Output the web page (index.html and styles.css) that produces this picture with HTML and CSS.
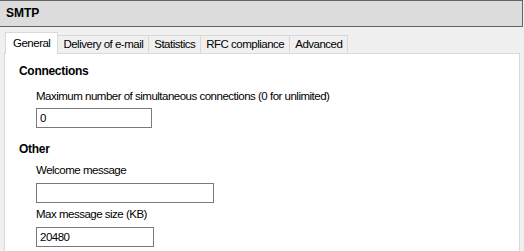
FILE: index.html
```html
<!DOCTYPE html>
<html lang="en">
<head>
  <meta charset="UTF-8">
  <title>SMTP</title>
  <link rel="stylesheet" href="styles.css">
</head>
<body>
<div class="window">
  <div class="header">SMTP</div>

  <div class="tabs">
    <div class="tab active">General</div>
    <div class="tab">Delivery of e-mail</div>
    <div class="tab">Statistics</div>
    <div class="tab">RFC compliance</div>
    <div class="tab">Advanced</div>
  </div>

  <div class="panel">
    <h3 class="first">Connections</h3>
    <div class="field gap-big">
      <label>Maximum number of simultaneous connections (0 for unlimited)</label>
      <input type="text" class="w115" value="0">
    </div>

    <h3>Other</h3>
    <div class="field gap-small roomy">
      <label>Welcome message</label>
      <input type="text" class="w177" value="">
    </div>
    <div class="field roomy">
      <label>Max message size (KB)</label>
      <input type="text" class="w117" value="20480">
    </div>
  </div>
</div>
</body>
</html>
```

FILE: styles.css
```css
* {
  box-sizing: border-box;
}

body {
  margin: 0;
  background: #f0f0f0;
  font-family: 'Liberation Sans', Arial, sans-serif;
  font-size: 11.5px;
  letter-spacing: -0.5px;
  color: #000;
  overflow: hidden;
}

.window {
  width: 523px;
  height: 251px;
}

.header {
  height: 27px;
  background: #dcdcdc;
  border-top: 1px solid #646464;
  border-bottom: 1px solid #646464;
  border-right: 1px solid #646464;
  padding-left: 6px;
  line-height: 25px;
  font-weight: bold;
  font-size: 12px;
  letter-spacing: 0;
}

.tabs {
  display: flex;
  align-items: flex-end;
  margin-top: 7px;
  padding-left: 5px;
  height: 19px;
}

.tab {
  height: 18px;
  line-height: 17px;
  padding: 0 5px;
  border: 1px solid #d9d9d9;
  border-bottom: none;
  margin-left: -1px;
  background: #f0f0f0;
}

.tab:first-child {
  margin-left: 0;
}

.tab.active {
  height: 22px;
  line-height: 20px;
  background: #fff;
  padding: 0 7px;
  position: relative;
  z-index: 1;
  margin-bottom: -1px;
}

.panel {
  width: 516px;
  height: 200px;
  margin-left: 4px;
  background: #fff;
  border: 1px solid #d9d9d9;
  padding: 10px 0 0 14px;
}

.panel h3 {
  margin: 0 0 8px 0;
  font-size: 12px;
  letter-spacing: -0.3px;
  font-weight: bold;
}

.panel h3.first {
  margin-bottom: 12px;
}

.field {
  display: flex;
  flex-direction: column;
  padding-left: 17px;
  margin-bottom: 5px;
}

.field.gap-big {
  margin-bottom: 14px;
}

.field.gap-small {
  margin-bottom: 5px;
}

.field label {
  margin-bottom: 6px;
}

.field.roomy label {
  margin-bottom: 7px;
}

.field input {
  height: 20px;
  border: 1px solid #7a7a7a;
  padding: 0 3px;
  font-family: 'Liberation Sans', Arial, sans-serif;
  font-size: 11.5px;
  letter-spacing: -0.5px;
  outline: none;
}

.w115 {
  width: 116px;
}

.w177 {
  width: 178px;
}

.w117 {
  width: 118px;
}
```
